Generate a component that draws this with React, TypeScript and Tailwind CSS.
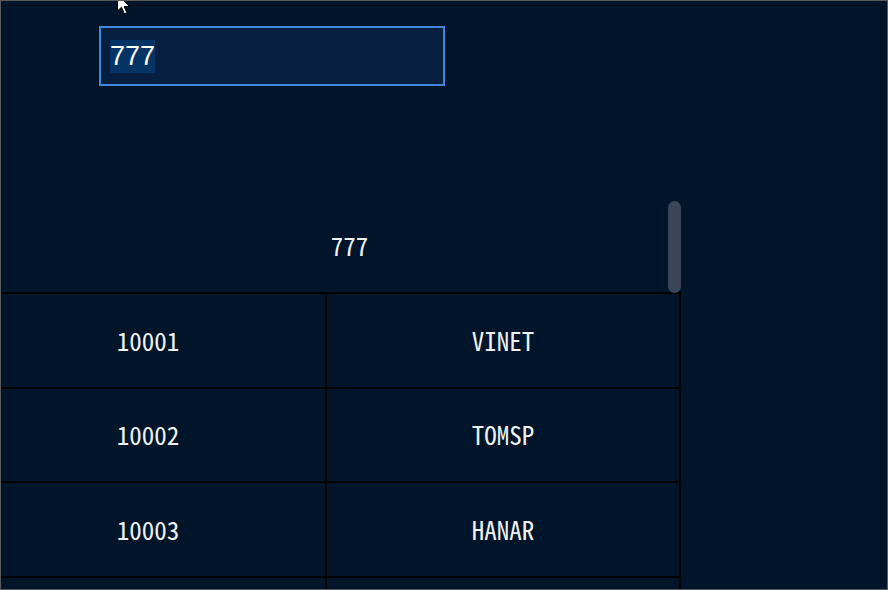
const rows = [
  { id: "10001", name: "VINET" },
  { id: "10002", name: "TOMSP" },
  { id: "10003", name: "HANAR" },
  { id: "", name: "" },
];

function Cursor() {
  return (
    <svg
      className="absolute left-[115px] top-[-8px]"
      width="16"
      height="24"
      viewBox="0 0 16 24"
    >
      <path
        d="M1.5 1 L1.5 18 L5.5 14.2 L8.5 21 L11 20 L8.2 13.5 L13.5 13.5 Z"
        fill="#ffffff"
        stroke="#000000"
        strokeWidth="1"
        strokeLinejoin="round"
      />
    </svg>
  );
}

export default function App() {
  return (
    <div className="relative h-[590px] w-[888px] overflow-hidden border border-[#5a5a5a] bg-[#001529]">
      <Cursor />
      <div className="ml-[98px] mt-[25px] flex h-[60px] w-[346px] items-center border-2 border-[#3f87d8] bg-[#061f40] px-[9px]">
        <span className="bg-[#043365] font-['Liberation_Sans',Arial,sans-serif] text-[27px] leading-[33px] text-white">
          777
        </span>
      </div>

      <div className="mt-[114px] h-[390px] w-[680px] overflow-hidden font-['Noto_Sans_Mono_CJK_SC','Noto_Sans_CJK_SC','DejaVu_Sans_Mono',monospace] text-[25px] font-medium text-[#f0f2f5]">
        <div className="relative -ml-[30px] w-[711px]">
          <div className="flex h-[92px] items-center justify-center pl-[46px]">777</div>
          <div className="absolute right-[1px] top-[1px] h-[92px] w-[13px] rounded-full bg-[#3a4657]" />
          {rows.map((r, i) => (
            <div key={i} className="flex h-[94.5px] border-t-2 border-black">
              <div className="flex w-[356px] items-center justify-center border-r-2 border-black">
                {r.id}
              </div>
              <div className="flex flex-1 items-center justify-center border-r-[3px] border-black">
                {r.name}
              </div>
            </div>
          ))}
        </div>
      </div>
    </div>
  );
}
